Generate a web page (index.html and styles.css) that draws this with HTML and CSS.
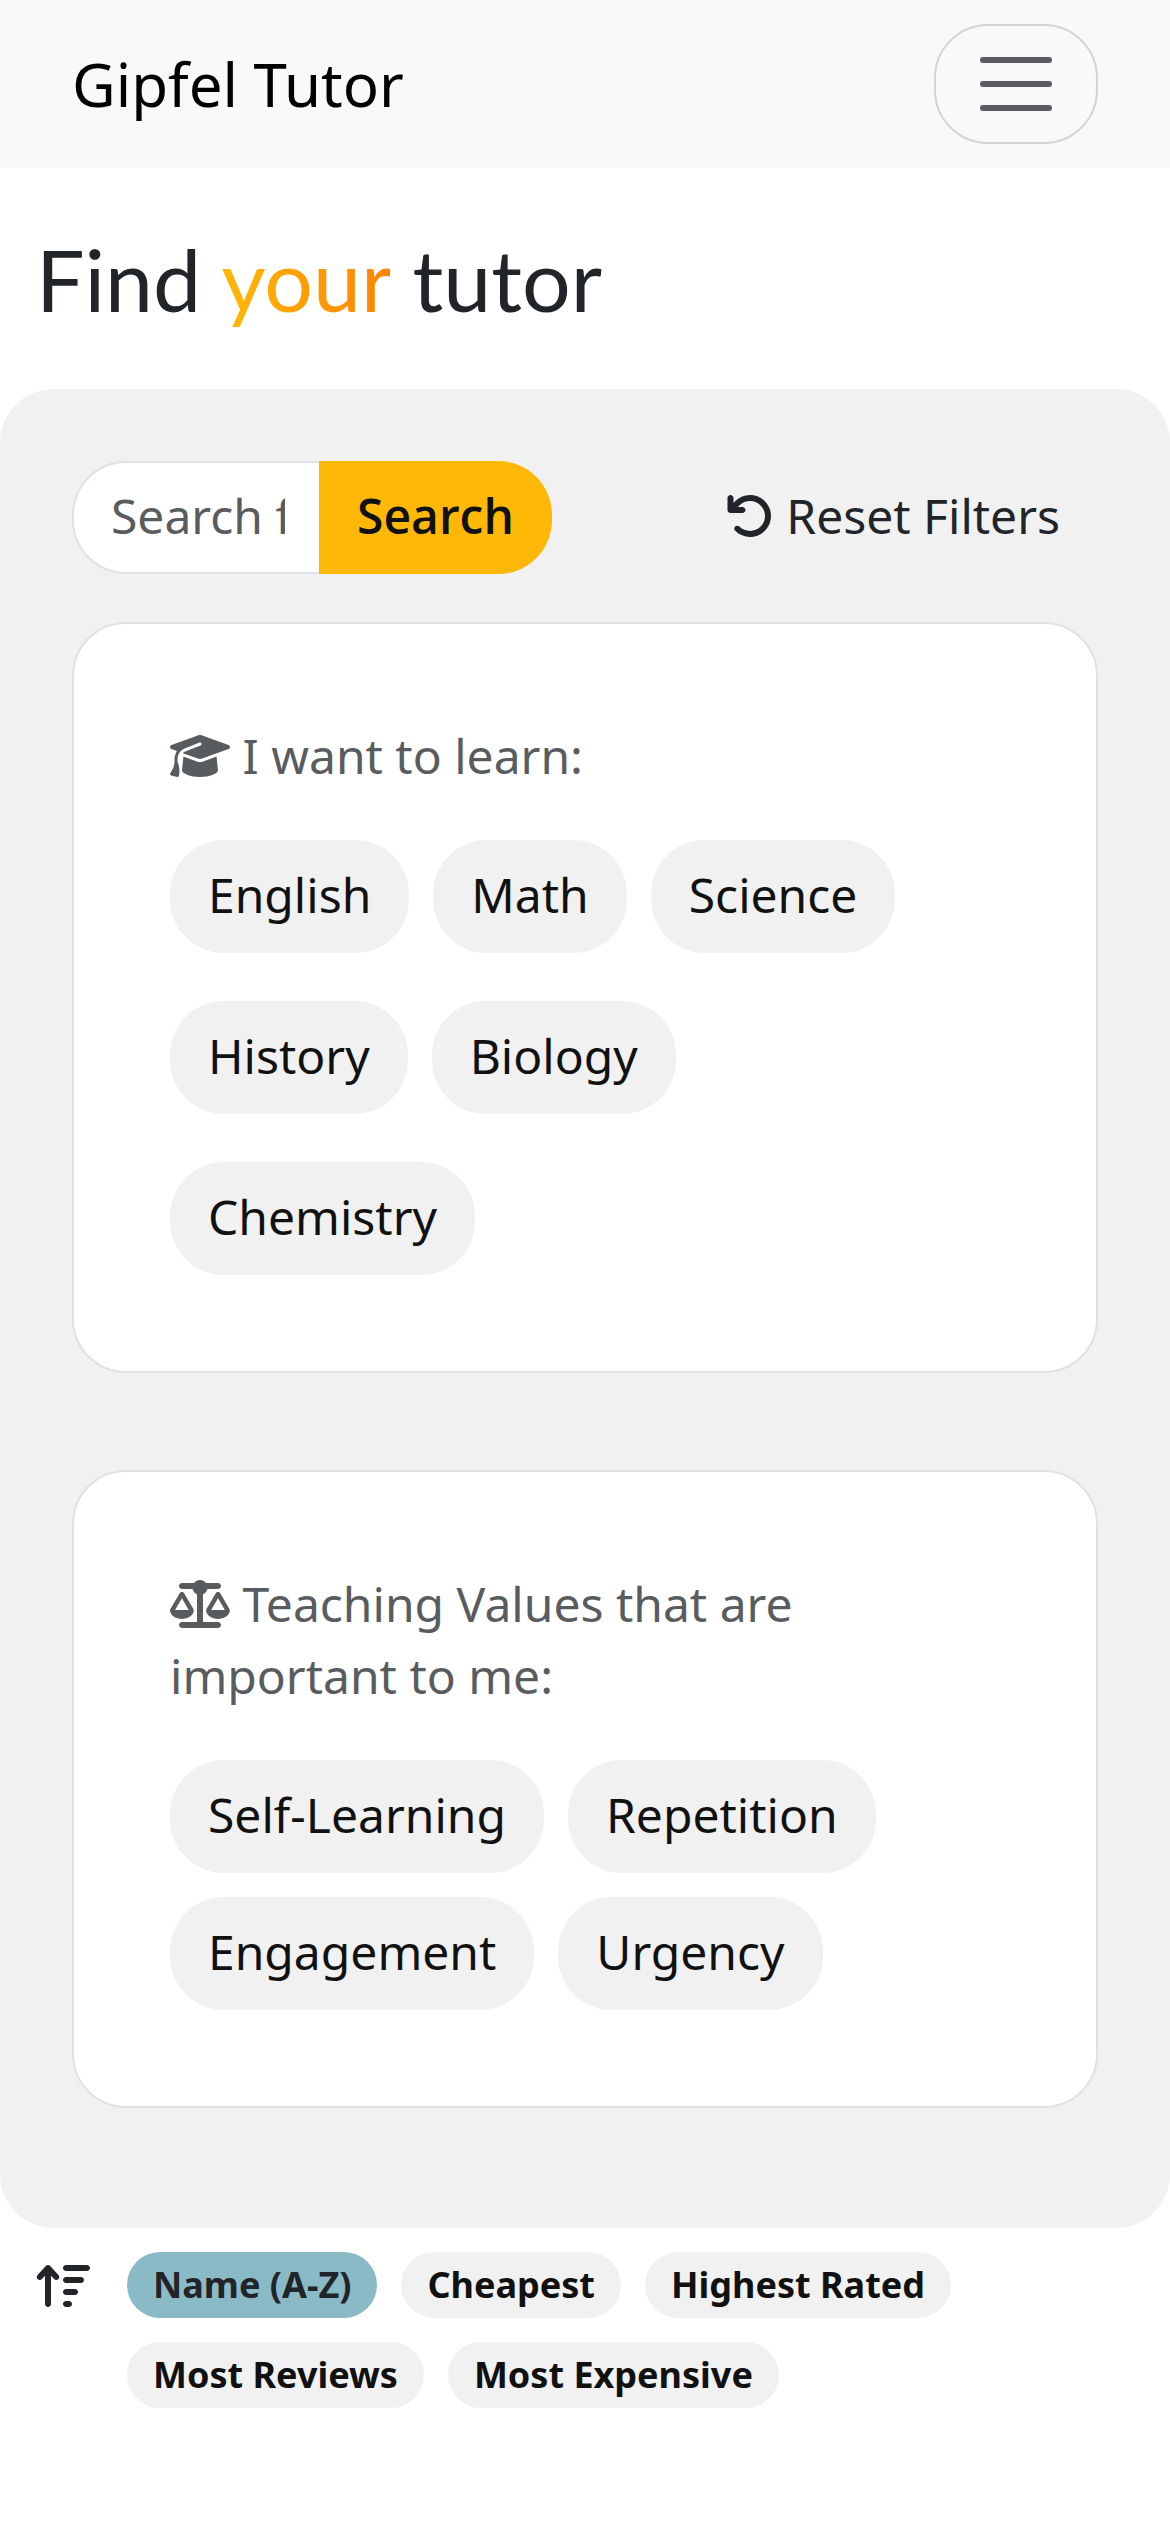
FILE: index.html
```html
<!DOCTYPE html>
<html lang="en">
<head>
<meta charset="utf-8">
<meta name="viewport" content="width=device-width">
<title>Gipfel Tutor</title>
<link rel="stylesheet" href="styles.css">
</head>
<body>
<header class="navbar">
  <a class="brand" href="#">Gipfel Tutor</a>
  <button class="toggler" type="button" aria-label="Toggle navigation">
    <svg class="toggler-icon" viewBox="0 0 30 30" aria-hidden="true"><path d="M4 7h22M4 15h22M4 23h22"/></svg>
  </button>
</header>
<main>
  <h1 class="title">Find <span class="accent">your</span> tutor</h1>
  <section class="panel">
    <div class="toolbar">
      <form class="search">
        <input class="search-input" type="text" placeholder="Search for tutors" aria-label="Search for tutors">
        <button class="search-button" type="button">Search</button>
      </form>
      <button class="reset" type="button"><svg class="icon" viewBox="0 0 512 512" aria-hidden="true"><path d="M125.700 160H176c17.700 0 32 14.300 32 32s-14.300 32-32 32H48c-17.700 0-32-14.300-32-32V64c0-17.700 14.300-32 32-32s32 14.300 32 32v51.200L97.600 97.600c87.500-87.500 229.300-87.500 316.800 0s87.500 229.300 0 316.800s-229.300 87.500-316.800 0c-12.500-12.500-12.500-32.800 0-45.300s32.800-12.500 45.300 0c62.500 62.500 163.800 62.500 226.300 0s62.500-163.800 0-226.300s-163.800-62.500-226.300 0L125.700 160z"/></svg> Reset Filters</button>
    </div>
    <div class="cards">
      <section class="card">
        <h2 class="card-label"><svg class="icon icon-wide" viewBox="0 0 640 512" aria-hidden="true"><path d="M320 32c-8.1 0-16.1 1.4-23.7 4.1L15.8 137.4C6.3 140.9 0 149.9 0 160s6.3 19.1 15.8 22.6l57.9 20.9C57.3 229.3 48 259.8 48 291.9v28.1c0 28.4-10.8 57.7-22.3 80.8c-6.5 13-13.9 25.8-22.5 37.6C0 442.7-.9 448.3 .9 453.4s6 8.900 11.200 10.200l64 16c4.200 1.100 8.700 .3 12.400-2s6.300-6.100 7.100-10.400c8.600-42.800 4.300-81.200-2.100-108.700C90.300 344.300 86 329.800 80 316.500V291.900c0-30.200 10.200-58.700 27.900-81.500c12.900-15.500 29.600-28 49.200-35.700l157-61.700c8.200-3.200 17.500 .8 20.700 9s-.8 17.500-9 20.700l-157 61.700c-12.400 4.900-23.300 12.400-32.200 21.600l159.600 57.600c7.600 2.700 15.600 4.100 23.700 4.100s16.100-1.400 23.700-4.100L624.200 182.600c9.500-3.400 15.800-12.500 15.800-22.600s-6.300-19.100-15.800-22.600L343.700 36.100C336.100 33.400 328.100 32 320 32zM128 408c0 35.300 86 72 192 72s192-36.700 192-72L496.700 262.600 354.500 314c-11.100 4-22.800 6-34.500 6s-23.500-2-34.500-6L143.300 262.600 128 408z"/></svg> I want to learn:</h2>
        <div class="chips chips-loose">
          <button class="chip" type="button">English</button>
          <button class="chip" type="button">Math</button>
          <button class="chip" type="button">Science</button>
          <button class="chip" type="button">History</button>
          <button class="chip" type="button">Biology</button>
          <button class="chip" type="button">Chemistry</button>
        </div>
      </section>
      <section class="card">
        <h2 class="card-label"><svg class="icon icon-wide" viewBox="0 0 640 512" aria-hidden="true"><path d="M384 32H512c17.700 0 32 14.300 32 32s-14.300 32-32 32H398.400c-5.200 25.800-22.900 47.100-46.400 57.300V448H512c17.700 0 32 14.300 32 32s-14.300 32-32 32H320 128c-17.700 0-32-14.300-32-32s14.300-32 32-32H288V153.300c-23.500-10.300-41.200-31.600-46.400-57.300H128c-17.700 0-32-14.300-32-32s14.300-32 32-32H256c14.600-19.400 37.800-32 64-32s49.400 12.600 64 32zm55.600 288H584.400L512 195.800 439.600 320zM512 416c-62.900 0-115.200-34-126-78.900c-2.600-11 1-22.300 6.700-32.100l95.200-163.200c5-8.600 14.200-13.800 24.100-13.800s19.100 5.300 24.100 13.800l95.200 163.200c5.700 9.800 9.300 21.100 6.700 32.100C627.200 382 574.900 416 512 416zM126.800 195.800L54.400 320H199.300L126.800 195.800zM.9 337.100c-2.600-11 1-22.300 6.700-32.100l95.200-163.200c5-8.600 14.200-13.800 24.100-13.800s19.100 5.300 24.100 13.800l95.200 163.200c5.700 9.800 9.300 21.100 6.700 32.100C242 382 189.700 416 126.800 416S11.700 382 .9 337.100z"/></svg> Teaching Values that are important to me:</h2>
        <div class="chips">
          <button class="chip" type="button">Self-Learning</button>
          <button class="chip" type="button">Repetition</button>
          <button class="chip" type="button">Engagement</button>
          <button class="chip" type="button">Urgency</button>
        </div>
      </section>
    </div>
  </section>
  <section class="sort" aria-label="Sort tutors">
    <svg class="sort-icon" viewBox="0 0 576 512" aria-hidden="true"><path d="M151.600 42.400C145.500 35.800 137 32 128 32s-17.500 3.800-23.600 10.400l-88 96c-11.900 13-11.100 33.300 2 45.200s33.300 11.100 45.200-2L96 146.300V448c0 17.700 14.300 32 32 32s32-14.300 32-32V146.300l32.400 35.400c11.900 13 32.200 13.900 45.200 2s13.900-32.200 2-45.200l-88-96zM320 480h32c17.700 0 32-14.300 32-32s-14.300-32-32-32H320c-17.700 0-32 14.300-32 32s14.300 32 32 32zm0-128h96c17.700 0 32-14.300 32-32s-14.300-32-32-32H320c-17.700 0-32 14.300-32 32s14.300 32 32 32zm0-128H480c17.700 0 32-14.300 32-32s-14.300-32-32-32H320c-17.700 0-32 14.300-32 32s14.300 32 32 32zm0-128H544c17.700 0 32-14.300 32-32s-14.300-32-32-32H320c-17.700 0-32 14.300-32 32s14.300 32 32 32z"/></svg>
    <div class="sort-options">
      <button class="sort-chip sort-chip-active" type="button">Name (A-Z)</button>
      <button class="sort-chip" type="button">Cheapest</button>
      <button class="sort-chip" type="button">Highest Rated</button>
      <button class="sort-chip" type="button">Most Reviews</button>
      <button class="sort-chip" type="button">Most Expensive</button>
    </div>
  </section>
</main>
</body>
</html>
```
FILE: styles.css
```css
* {
  box-sizing: border-box;
}

body {
  margin: 0;
  background: #fff;
  color: #212529;
  font: 400 48px/72px "Noto Sans", sans-serif;
}

button,
input {
  margin: 0;
  font: inherit;
  color: inherit;
}

.navbar {
  display: flex;
  align-items: center;
  justify-content: space-between;
  padding: 24px 72px;
  background: #f8f9fb;
}

.brand {
  color: #000;
  font-size: 60px;
  line-height: 90px;
  text-decoration: none;
}

.toggler {
  display: flex;
  padding: 13px 35px;
  border: 2px solid #d3d4d6;
  border-radius: 54px;
  background: transparent;
}

.toggler-icon {
  width: 90px;
  height: 90px;
  fill: none;
  stroke: #595b5e;
  stroke-width: 2;
  stroke-linecap: round;
}

.title {
  margin: 0;
  padding: 60px 36px;
  font: 400 86px/101px Lato, sans-serif;
}

.accent {
  background: linear-gradient(to right, #ffb808, #ff8300);
  background-clip: text;
  color: transparent;
}

.panel {
  padding: 72px 72px 120px;
  border-radius: 54px;
  background: #f1f1f1;
}

.toolbar {
  display: flex;
  justify-content: space-between;
  margin-bottom: 48px;
}

.search {
  display: flex;
}

.search-input {
  width: 247px;
  height: 113px;
  padding: 0 34px 4px 37px;
  border: 2px solid #dee2e6;
  border-right: 0;
  border-radius: 54px 0 0 54px;
  background: #fff;
  appearance: none;
}

.search-input::placeholder {
  color: #595c5f;
  opacity: 1;
}

.search-button {
  padding: 0 38px 4px;
  border: 0;
  border-radius: 0 54px 54px 0;
  background: #ffb808;
  color: #111;
  font-family: "Open Sans", "Noto Sans", sans-serif;
  font-weight: 600;
}

.reset {
  padding: 0 38px 4px;
  border: 0;
  background: transparent;
}

.icon {
  width: 48px;
  height: 48px;
  fill: currentColor;
  vertical-align: -6px;
}

.icon-wide {
  width: 60px;
}

.cards {
  display: grid;
  gap: 97px;
}

.card {
  padding: 96px;
  border: 2px solid #dee2e6;
  border-radius: 54px;
  background: #fff;
}

.card-label {
  margin: 0 0 48px;
  color: #595c5f;
  font-size: 48px;
  font-weight: 400;
}

.chips {
  display: flex;
  flex-wrap: wrap;
  gap: 24px;
}

.chips-loose {
  row-gap: 48px;
}

.chip {
  height: 113px;
  padding: 0 38px 4px;
  border: 0;
  border-radius: 54px;
  background: #f1f1f1;
  color: #111;
}

.sort {
  display: flex;
  align-items: flex-start;
  gap: 37px;
  padding: 24px 36px;
}

.sort-icon {
  flex: none;
  width: 54px;
  height: 48px;
  margin-top: 10px;
  fill: currentColor;
}

.sort-options {
  display: flex;
  flex-wrap: wrap;
  gap: 24px;
}

.sort-chip {
  height: 66px;
  padding: 0 26px;
  border: 0;
  border-radius: 33px;
  background: #f1f1f1;
  color: #111;
  font-size: 36px;
  font-weight: 700;
  line-height: 54px;
}

.sort-chip-active {
  background: #8bbac7;
  color: #212529;
}
```
